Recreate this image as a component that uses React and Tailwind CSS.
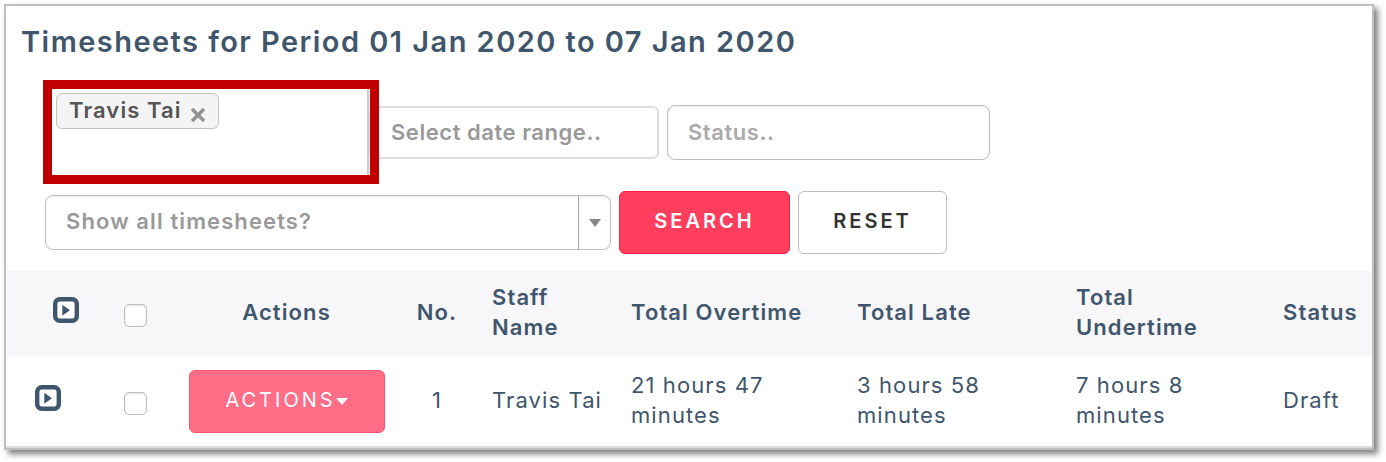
import { useState } from "react";

const columns = [
  { key: "staff", label: "Staff Name" },
  { key: "overtime", label: "Total Overtime" },
  { key: "late", label: "Total Late" },
  { key: "undertime", label: "Total Undertime" },
  { key: "status", label: "Status" },
];

const timesheets = [
  {
    id: 1,
    staff: "Travis Tai",
    overtime: "21 hours 47 minutes",
    late: "3 hours 58 minutes",
    undertime: "7 hours 8 minutes",
    status: "Draft",
  },
];

function ExpandIcon() {
  return (
    <svg viewBox="0 0 26 26" className="block h-[26px] w-[26px]" aria-hidden="true">
      <rect x="2.2" y="2.2" width="21.6" height="21.6" rx="4.5" fill="white" stroke="#40566d" strokeWidth="4.4" />
      <path d="M9.3 7.8v11l7.6-5.5z" fill="#40566d" />
    </svg>
  );
}

function Tick({ label, checked, onChange }) {
  return (
    <input
      type="checkbox"
      aria-label={label}
      checked={checked}
      onChange={onChange}
      className="mx-auto mt-1 block h-[23px] w-[23px] appearance-none rounded-[5px] border border-[#bdbdbd] bg-white shadow-[inset_0_1px_2px_rgba(0,0,0,0.12)] checked:bg-[#40566d]"
    />
  );
}

function Filters() {
  const [staff, setStaff] = useState(["Travis Tai"]);

  return (
    <form className="mt-5 px-[39px]" onSubmit={(e) => e.preventDefault()}>
      <div className="flex items-center">
        <div className="relative h-[104px] w-[324px] shrink-0">
          <div className="flex h-full items-start border-r-2 border-[#c9c9c9] pt-[13px] pl-[11px]">
            {staff.map((name) => (
              <span
                key={name}
                className="flex h-9 shrink-0 items-center gap-2 rounded-md border border-[#c4c4c4] bg-[#f4f4f4] px-3 pb-0.5 font-semibold text-[#555]"
              >
                {name}
                <button
                  type="button"
                  aria-label={`Remove ${name}`}
                  className="mt-2.5"
                  onClick={() => setStaff(staff.filter((s) => s !== name))}
                >
                  <svg viewBox="0 0 16 16" className="h-4 w-4" aria-hidden="true">
                    <path d="M2 2l12 12M14 2L2 14" stroke="#929292" strokeWidth="3.4" />
                  </svg>
                </button>
              </span>
            ))}
            <input aria-label="Staff" className="h-9 min-w-0 flex-1 outline-none" />
          </div>
          <div className="pointer-events-none absolute inset-y-0 -right-[10px] -left-[2px] border-[9px] border-[#c00000]" />
        </div>
        <input
          aria-label="Date range"
          placeholder="Select date range.."
          className="h-[53px] w-[290px] rounded-md border-2 border-[#dedede] pl-5 font-semibold tracking-wide placeholder:text-[#999]"
        />
        <input
          aria-label="Status"
          placeholder="Status.."
          className="ml-2 h-[55px] w-[323px] rounded-lg border border-[#bdbdbd] pl-5 font-semibold tracking-wide shadow-[inset_0_1px_2px_rgba(0,0,0,0.08)] placeholder:text-[#aaa]"
        />
      </div>

      <div className="mt-[7px] flex items-center gap-2">
        <div className="relative h-[55px] w-[566px]">
          <select
            aria-label="Show all timesheets"
            className="h-full w-full appearance-none rounded-lg border border-[#bdbdbd] bg-white pb-1 pl-5 font-semibold tracking-wider text-[#999] shadow-[inset_0_1px_2px_rgba(0,0,0,0.08)]"
          >
            <option>Show all timesheets?</option>
          </select>
          <span className="pointer-events-none absolute inset-y-px right-px flex w-8 items-center justify-center border-l border-[#aaa]">
            <svg viewBox="0 0 12 8" className="h-2 w-3" aria-hidden="true">
              <path d="M0 0h12L6 8z" fill="#888" />
            </svg>
          </span>
        </div>
        <button
          type="submit"
          className="h-[63px] w-[171px] rounded-md border border-[#ff1c41] bg-[#ff3d5c] pb-1 text-[20px] font-semibold tracking-[3px] text-white"
        >
          SEARCH
        </button>
        <button
          type="reset"
          className="h-[63px] w-[149px] rounded-md border border-[#bdbdbd] bg-white pb-1 text-[20px] font-semibold tracking-[3px] text-[#333]"
        >
          RESET
        </button>
      </div>
    </form>
  );
}

function TimesheetTable() {
  const [selected, setSelected] = useState([]);
  const allSelected = selected.length === timesheets.length;

  const toggle = (id) =>
    setSelected(selected.includes(id) ? selected.filter((s) => s !== id) : [...selected, id]);

  return (
    <table className="mt-4 w-full table-fixed border-b-2 border-[#dcdcdc] text-left">
      <colgroup>
        <col className="w-[89px]" />
        <col className="w-[81px]" />
        <col className="w-[221px]" />
        <col className="w-[80px]" />
        <col className="w-[139px]" />
        <col className="w-[226px]" />
        <col className="w-[219px]" />
        <col className="w-[207px]" />
        <col className="w-[104px]" />
      </colgroup>
      <thead className="bg-[#f7f7fa]">
        <tr className="h-[87px]">
          <th className="pb-2 pl-[47px]">
            <button type="button" aria-label="Expand all" className="block">
              <ExpandIcon />
            </button>
          </th>
          <th>
            <Tick
              label="Select all"
              checked={allSelected}
              onChange={() => setSelected(allSelected ? [] : timesheets.map((t) => t.id))}
            />
          </th>
          <th className="pb-1 text-center font-semibold">Actions</th>
          <th className="pb-1 text-center font-semibold">No.</th>
          {columns.map((col) => (
            <th key={col.key} className="pr-5 pb-1 pl-[15px] font-semibold last:pr-0">
              {col.label}
            </th>
          ))}
        </tr>
      </thead>
      <tbody>
        {timesheets.map((row) => (
          <tr key={row.id} className="h-[90px]">
            <td className="pb-2 pl-[29px]">
              <button type="button" aria-label="Expand row" className="block">
                <ExpandIcon />
              </button>
            </td>
            <td>
              <Tick
                label={`Select ${row.staff}`}
                checked={selected.includes(row.id)}
                onChange={() => toggle(row.id)}
              />
            </td>
            <td>
              <button
                type="button"
                className="mx-auto flex h-[63px] w-[196px] items-center justify-center rounded-md border border-[#ff5575] bg-[#ff6d87] pb-1 text-[20px] tracking-[3px] text-white"
              >
                ACTIONS
                <svg viewBox="0 0 12 7" className="mt-1 h-[7px] w-3" aria-hidden="true">
                  <path d="M0 0h12L6 7z" fill="white" />
                </svg>
              </button>
            </td>
            <td className="pb-1 text-center">{row.id}</td>
            {columns.map((col) => (
              <td
                key={col.key}
                className={col.key === "staff" ? "pb-1 pl-[15px] whitespace-nowrap" : "pr-10 pb-1 pl-[15px] last:pr-0"}
              >
                {row[col.key]}
              </td>
            ))}
          </tr>
        ))}
      </tbody>
    </table>
  );
}

export default function App() {
  return (
    <div className="bg-white pt-1 pr-3 pb-[13px] pl-1 font-['Inter','Liberation_Sans',sans-serif] text-[22px] leading-[30px] tracking-wider text-[#40566d]">
      <main className="border-2 border-[#bfbfbf] bg-white shadow-[4px_4px_6px_rgba(0,0,0,0.5)]">
        <h1 className="px-[15px] pt-[18px] text-[29px] leading-9 font-semibold tracking-wider">
          Timesheets for Period 01 Jan 2020 to 07 Jan 2020
        </h1>
        <Filters />
        <TimesheetTable />
      </main>
    </div>
  );
}
